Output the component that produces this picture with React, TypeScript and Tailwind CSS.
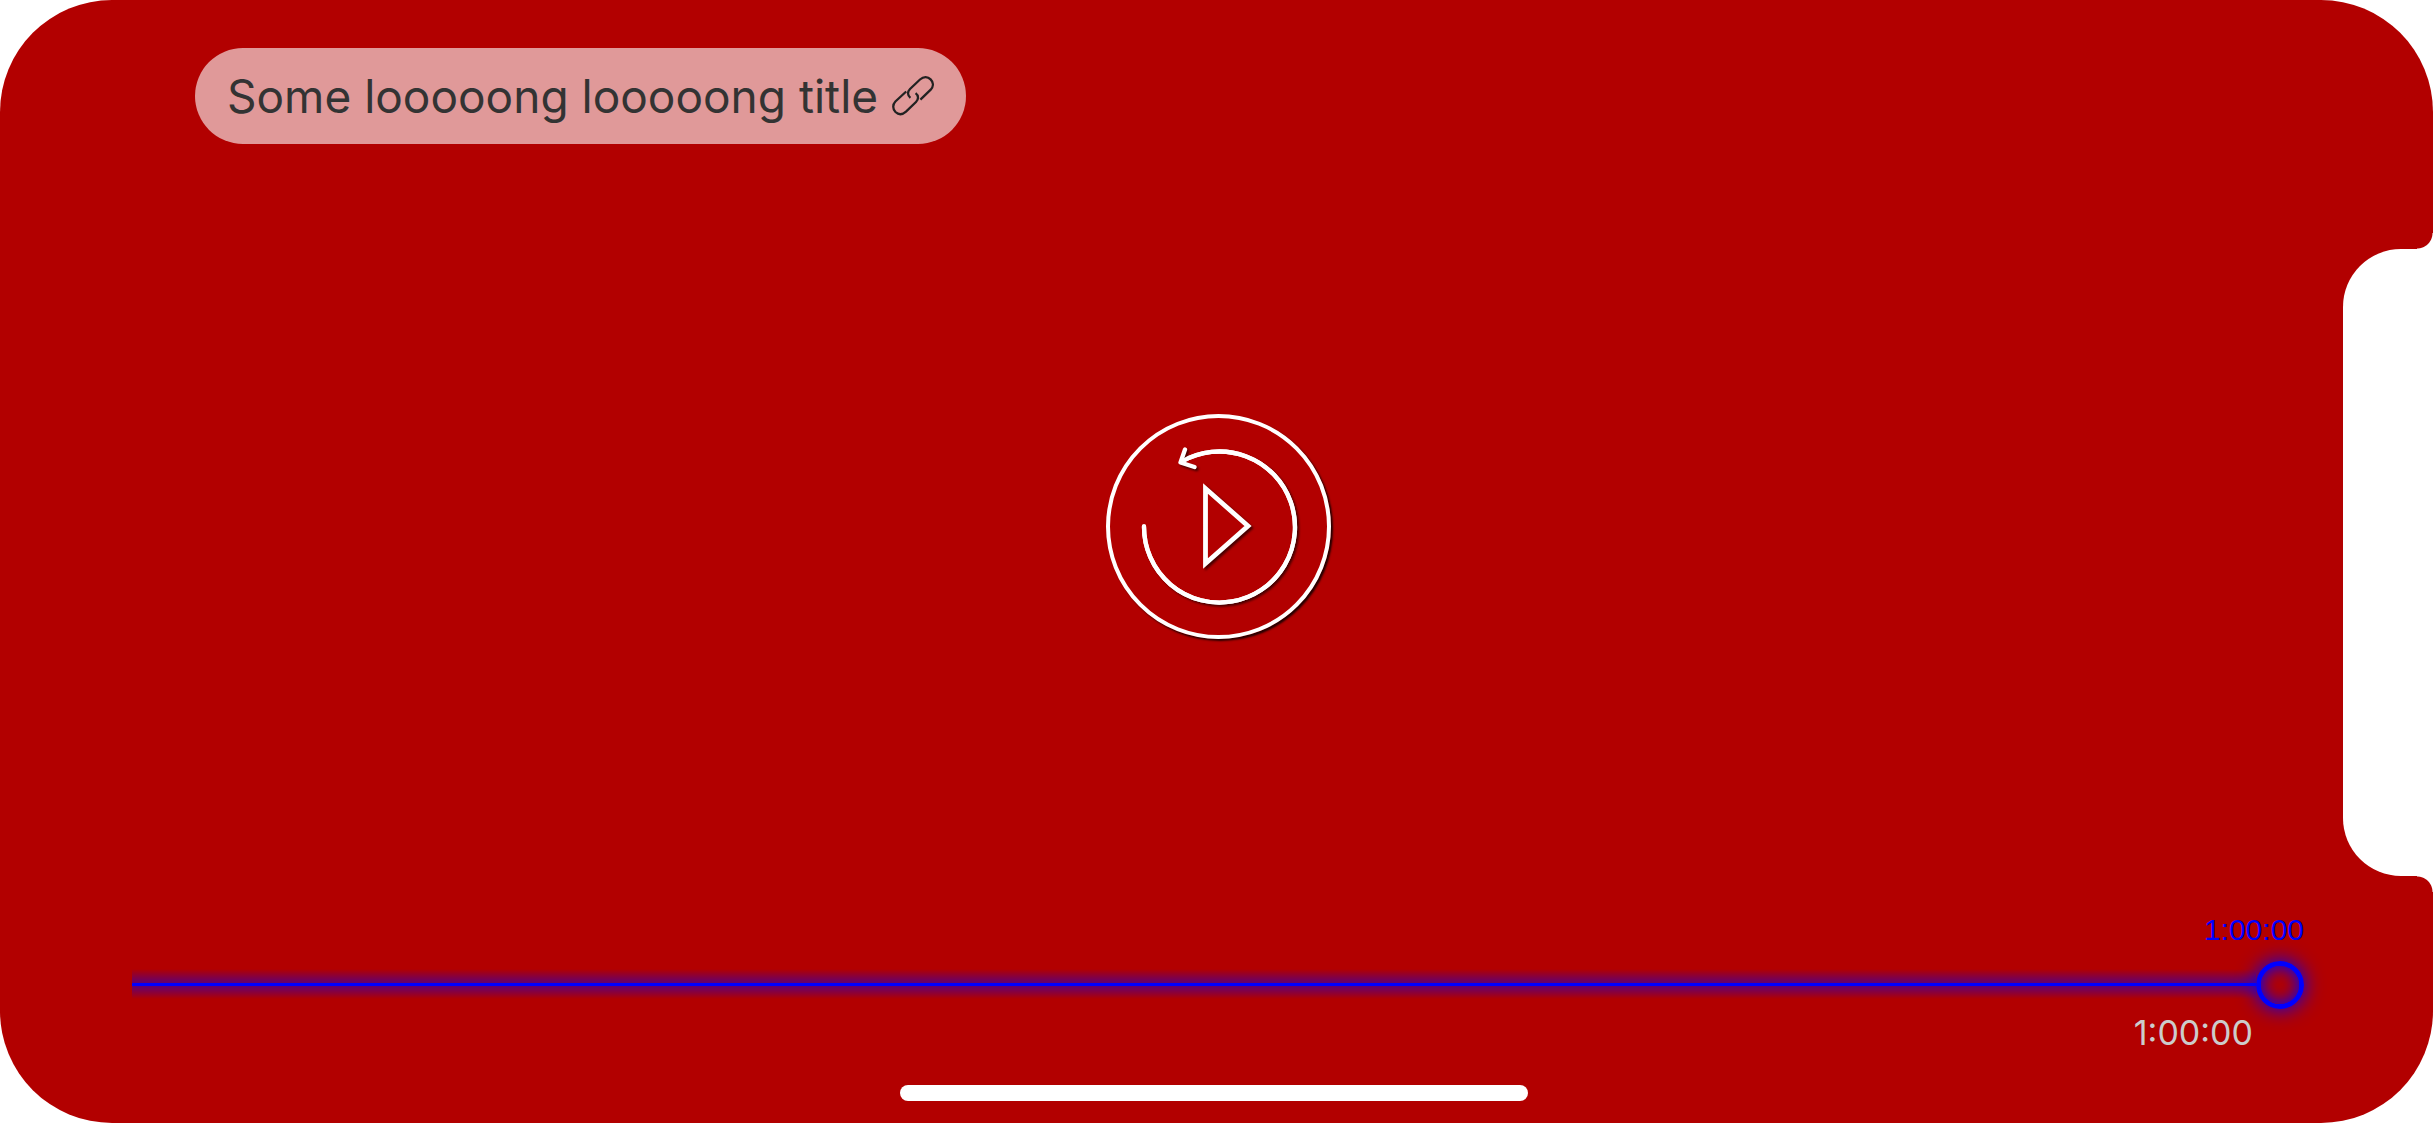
import { useState } from "react";

const DURATION = 3600;

function formatTime(seconds: number) {
  const h = Math.floor(seconds / 3600);
  const m = String(Math.floor((seconds % 3600) / 60)).padStart(2, "0");
  const s = String(seconds % 60).padStart(2, "0");
  return `${h}:${m}:${s}`;
}

function LinkIcon() {
  return (
    <svg
      viewBox="0 0 42 40"
      className="h-10 w-[42px] shrink-0"
      fill="none"
      stroke="#222222"
      strokeWidth="2.3"
      aria-hidden="true"
    >
      <path d="M18.400 21.800C15.300 19.500 15.300 15.800 18 13L28 3.500C31.500 .5 35.800 .5 38.600 3.400C41.600 6.400 41.600 10.500 38.700 13.700L28.400 23.700" />
      <path d="M23.600 17.200C26.700 19.500 26.700 23.300 24 26L14 35.600C10.500 38.700 6.500 38.800 3.500 36C.5 33 .5 28.500 3.400 25.500L14.200 15.500" />
    </svg>
  );
}

const ARC = "M38 112.500A75.500 75.500 0 1 0 76 47.500";

/* The shapes are filled with the player colour so that each shadow shows only outside its outline. */
function ReplayIcon() {
  return (
    <svg
      viewBox="4 4 217 217"
      className="size-full overflow-visible"
      fill="#b20000"
      stroke="#ffffff"
      strokeWidth="4.3"
      strokeLinecap="round"
      aria-hidden="true"
    >
      <g className="drop-shadow-[2px_2px_1px_rgba(0,0,0,0.6)]">
        <path d={ARC} />
      </g>
      <g className="drop-shadow-[2px_2px_1px_rgba(0,0,0,0.6)]">
        <path d="M79 35.500L74.500 48.500L88.500 53" fill="none" strokeLinejoin="round" />
      </g>
      <path d={ARC} fill="none" />
      <g className="drop-shadow-[2px_2px_1px_rgba(0,0,0,0.6)]">
        <path d="M99.500 74.500V149.500L142 112Z" strokeWidth="4.8" />
      </g>
    </svg>
  );
}

function Notch() {
  return (
    <div className="absolute inset-y-0 right-0 flex flex-col items-end justify-center" aria-hidden="true">
      <div className="mr-[3px] size-4 bg-[radial-gradient(circle_at_0_0,transparent_15px,#fff_16px)]" />
      <div className="h-[627px] w-[93px] rounded-l-[58px] bg-white" />
      <div className="mr-[3px] size-4 bg-[radial-gradient(circle_at_0_100%,transparent_15px,#fff_16px)]" />
    </div>
  );
}

export default function App() {
  const [position, setPosition] = useState(DURATION);

  return (
    <div className="relative isolate flex min-h-screen flex-col bg-white font-[Inter,sans-serif]">
      <div className="absolute inset-0 -z-10 mr-[3px] mb-[2px] rounded-[112px] bg-[#b20000]" />
      <Notch />

      <header className="flex px-[195px] pt-12">
        <a
          href="#"
          className="flex h-24 items-center gap-3.5 rounded-full bg-white/60 px-8 text-[46px] leading-none text-[#333333]"
        >
          Some looooong looooong title
          <LinkIcon />
        </a>
      </header>

      <main className="flex flex-1 items-center justify-center">
        <button
          type="button"
          aria-label="Replay"
          className="size-[225px] cursor-pointer rounded-full border-4 border-white shadow-[2px_2px_2px_rgba(0,0,0,0.8)]"
        >
          <ReplayIcon />
        </button>
      </main>

      <footer className="relative flex flex-col px-[132px] pb-6">
        <output
          htmlFor="seek"
          className="self-end font-['Liberation_Sans',Arial,sans-serif] text-[30px] leading-[42px] text-[#0000ff]"
        >
          {formatTime(position)}
        </output>
        <input
          id="seek"
          type="range"
          aria-label="Seek"
          min={0}
          max={DURATION}
          value={position}
          onChange={(e) => setPosition(Number(e.target.value))}
          style={{ backgroundSize: `calc((100% - 48px) * ${position / DURATION}) 100%` }}
          className="mt-[10px] h-12 w-full cursor-pointer appearance-none bg-transparent bg-[linear-gradient(to_bottom,transparent_8px,rgba(0,0,255,0.45)_22px,#00f_22px,#00f_25px,rgba(0,0,255,0.45)_25px,transparent_38px)] bg-no-repeat outline-none [&::-webkit-slider-thumb]:size-12 [&::-webkit-slider-thumb]:appearance-none [&::-webkit-slider-thumb]:rounded-full [&::-webkit-slider-thumb]:border-[5px] [&::-webkit-slider-thumb]:border-[#0000ff] [&::-webkit-slider-thumb]:bg-transparent [&::-webkit-slider-thumb]:shadow-[0_0_20px_#0000ff,inset_0_0_16px_#0000ff]"
        />
        <span className="mt-1 mr-[51px] self-end text-[34px] leading-10 text-[#cccccc]">{formatTime(DURATION)}</span>
        <div className="mt-8 mr-2 h-4 w-[628px] self-center rounded-full bg-white" />
      </footer>
    </div>
  );
}
